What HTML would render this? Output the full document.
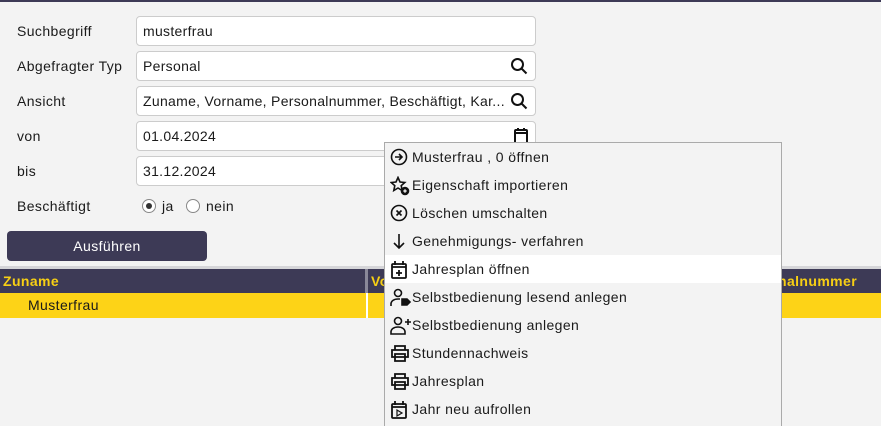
<!DOCTYPE html>
<html><head><meta charset="utf-8"><style>
*{box-sizing:border-box;margin:0;padding:0}
html{width:881px;height:426px;overflow:hidden}
body{width:881px;height:426px;overflow:hidden;background:#f3f3f3;font-family:"Liberation Sans",sans-serif;font-size:14px;color:#1a1a1a;position:relative;letter-spacing:.4px}
.top{position:absolute;left:0;top:0;width:881px;height:2px;background:#3d3a56}
.lbl{position:absolute;left:17px;font-size:14px}
.inp{position:absolute;left:136px;width:400px;height:30px;background:#fff;border:1px solid #ccc;border-radius:4px;padding-left:6px;line-height:28px;font-size:14px;letter-spacing:.3px}
.inp svg{position:absolute;right:7px;top:5px}
.btn{position:absolute;left:7px;top:231px;width:200px;height:30px;background:#3d3a56;border-radius:4px;color:#fff;text-align:center;line-height:30px;font-size:14px}
.radio{position:absolute;top:199px;width:14px;height:14px;border:1px solid #888;border-radius:50%;background:#fff}
.band{position:absolute;left:0;top:266px;width:881px;height:3px;background:#d5d5d8}
.hdr{position:absolute;left:0;top:269px;width:881px;height:24px;background:#3d3a56;color:#f7cf14;font-weight:bold;font-size:14px;line-height:24px}
.row{position:absolute;left:0;top:293px;width:881px;height:25px;background:#fdd317;line-height:25px}
.menu{position:absolute;left:384px;top:142px;width:398px;height:284px;background:#f3f3f3;border:1px solid #aaa;border-bottom:none;overflow:hidden}
.it{height:28px;line-height:28px;position:relative;padding-left:27px;font-size:14px;color:#1a1a1a}
.it.hi{background:#fff}
.it svg{position:absolute;left:5px;top:5px}
</style></head><body>
<div class="top"></div>
<div class="lbl" style="top:23px">Suchbegriff</div>
<div class="lbl" style="top:58px">Abgefragter Typ</div>
<div class="lbl" style="top:93px">Ansicht</div>
<div class="lbl" style="top:128px">von</div>
<div class="lbl" style="top:163px">bis</div>
<div class="lbl" style="top:198px">Beschäftigt</div>
<div class="inp" style="top:16px">musterfrau</div>
<div class="inp" style="top:51px">Personal<svg width="18" height="18" viewBox="0 0 18 18" fill="none" stroke="#111" stroke-width="2"><circle cx="7.5" cy="7.5" r="5.5"/><path d="M11.5 11.5l5 5"/></svg></div>
<div class="inp" style="top:86px">Zuname, Vorname, Personalnummer, Beschäftigt, Kar...<svg width="18" height="18" viewBox="0 0 18 18" fill="none" stroke="#111" stroke-width="2"><circle cx="7.5" cy="7.5" r="5.5"/><path d="M11.5 11.5l5 5"/></svg></div>
<div class="inp" style="top:121px">01.04.2024<svg width="14" height="18" viewBox="0 0 14 18" fill="none" stroke="#111" stroke-width="2"><rect x="1" y="3" width="12" height="14" rx="1"/><path d="M1 6h12M4 1v3M10 1v3"/></svg></div>
<div class="inp" style="top:156px">31.12.2024</div>
<div class="radio" style="left:142px"><div style="width:6px;height:6px;background:#333;border-radius:50%;margin:3px"></div></div>
<div style="position:absolute;left:162px;top:198px">ja</div>
<div class="radio" style="left:186px"></div>
<div style="position:absolute;left:206px;top:198px">nein</div>
<div class="btn">Ausführen</div>
<div class="band"></div>
<div class="hdr"><span style="position:absolute;left:3px">Zuname</span><span style="position:absolute;left:371px">Vo</span><span style="position:absolute;left:778px">nalnummer</span><div style="position:absolute;left:365px;top:0;width:3px;height:24px;background:#8a8899"></div></div>
<div class="row"><span style="position:absolute;left:28px">Musterfrau</span><div style="position:absolute;left:366px;top:0;width:2px;height:25px;background:#fff"></div></div>
<div class="menu">
<div class="it"><svg width="18" height="18" viewBox="0 0 18 18" fill="none" stroke="#111" stroke-width="1.6"><circle cx="9" cy="9" r="7.5"/><path d="M5 9h7M9 6l3 3-3 3"/></svg>Musterfrau , 0 öffnen</div>
<div class="it"><svg width="20" height="20" viewBox="0 0 20 20" fill="none" stroke="#111" stroke-width="1.6"><path d="M8 1.5l2 4.5 4.8.5-3.6 3.2 1 4.8L8 12l-4.2 2.5 1-4.8L1.2 6.5 6 6z"/><circle cx="15" cy="15" r="3.5" fill="#111"/><path d="M15 13.3v3.4M13.3 15h3.4" stroke="#fff" stroke-width="1.2"/></svg>Eigenschaft importieren</div>
<div class="it"><svg width="18" height="18" viewBox="0 0 18 18" fill="none" stroke="#111" stroke-width="1.6"><circle cx="9" cy="9" r="7.5"/><path d="M6.5 6.5l5 5M11.5 6.5l-5 5"/></svg>Löschen umschalten</div>
<div class="it"><svg width="18" height="18" viewBox="0 0 18 18" fill="none" stroke="#111" stroke-width="1.6"><path d="M9 2v14M4 11l5 5 5-5"/></svg>Genehmigungs- verfahren</div>
<div class="it hi"><svg width="18" height="20" viewBox="0 0 18 20" fill="none" stroke="#111" stroke-width="1.8"><rect x="2" y="4" width="14" height="14" rx="1"/><path d="M2 7h14M5 1v4M13 1v4M9 10v6M6 13h6"/></svg>Jahresplan öffnen</div>
<div class="it"><svg width="22" height="20" viewBox="0 0 22 20" fill="none" stroke="#111" stroke-width="1.6"><circle cx="8" cy="5" r="3.5"/><path d="M1 18v-2c0-3 3-5 7-5h2"/><path d="M12 11l5 0 3 3-3 3-5 0z" fill="#111"/></svg>Selbstbedienung lesend anlegen</div>
<div class="it"><svg width="22" height="20" viewBox="0 0 22 20" fill="none" stroke="#111" stroke-width="1.6"><circle cx="8" cy="5" r="3.5"/><path d="M1 18v-2c0-3 3-5 7-5s7 2 7 5v2zM18 3v6M15 6h6"/></svg>Selbstbedienung anlegen</div>
<div class="it"><svg width="20" height="18" viewBox="0 0 20 18" fill="none" stroke="#111" stroke-width="1.8"><path d="M5 6V2h10v4M2 6h16v7H2zM5 10h10v7H5z"/></svg>Stundennachweis</div>
<div class="it"><svg width="20" height="18" viewBox="0 0 20 18" fill="none" stroke="#111" stroke-width="1.8"><path d="M5 6V2h10v4M2 6h16v7H2zM5 10h10v7H5z"/></svg>Jahresplan</div>
<div class="it"><svg width="18" height="20" viewBox="0 0 18 20" fill="none" stroke="#111" stroke-width="1.8"><rect x="2" y="4" width="14" height="14" rx="1"/><path d="M2 7h14M5 1v4M13 1v4"/><path d="M7 10v6l5-3z" stroke-width="1.2"/></svg>Jahr neu aufrollen</div>
</div>
</body></html>
